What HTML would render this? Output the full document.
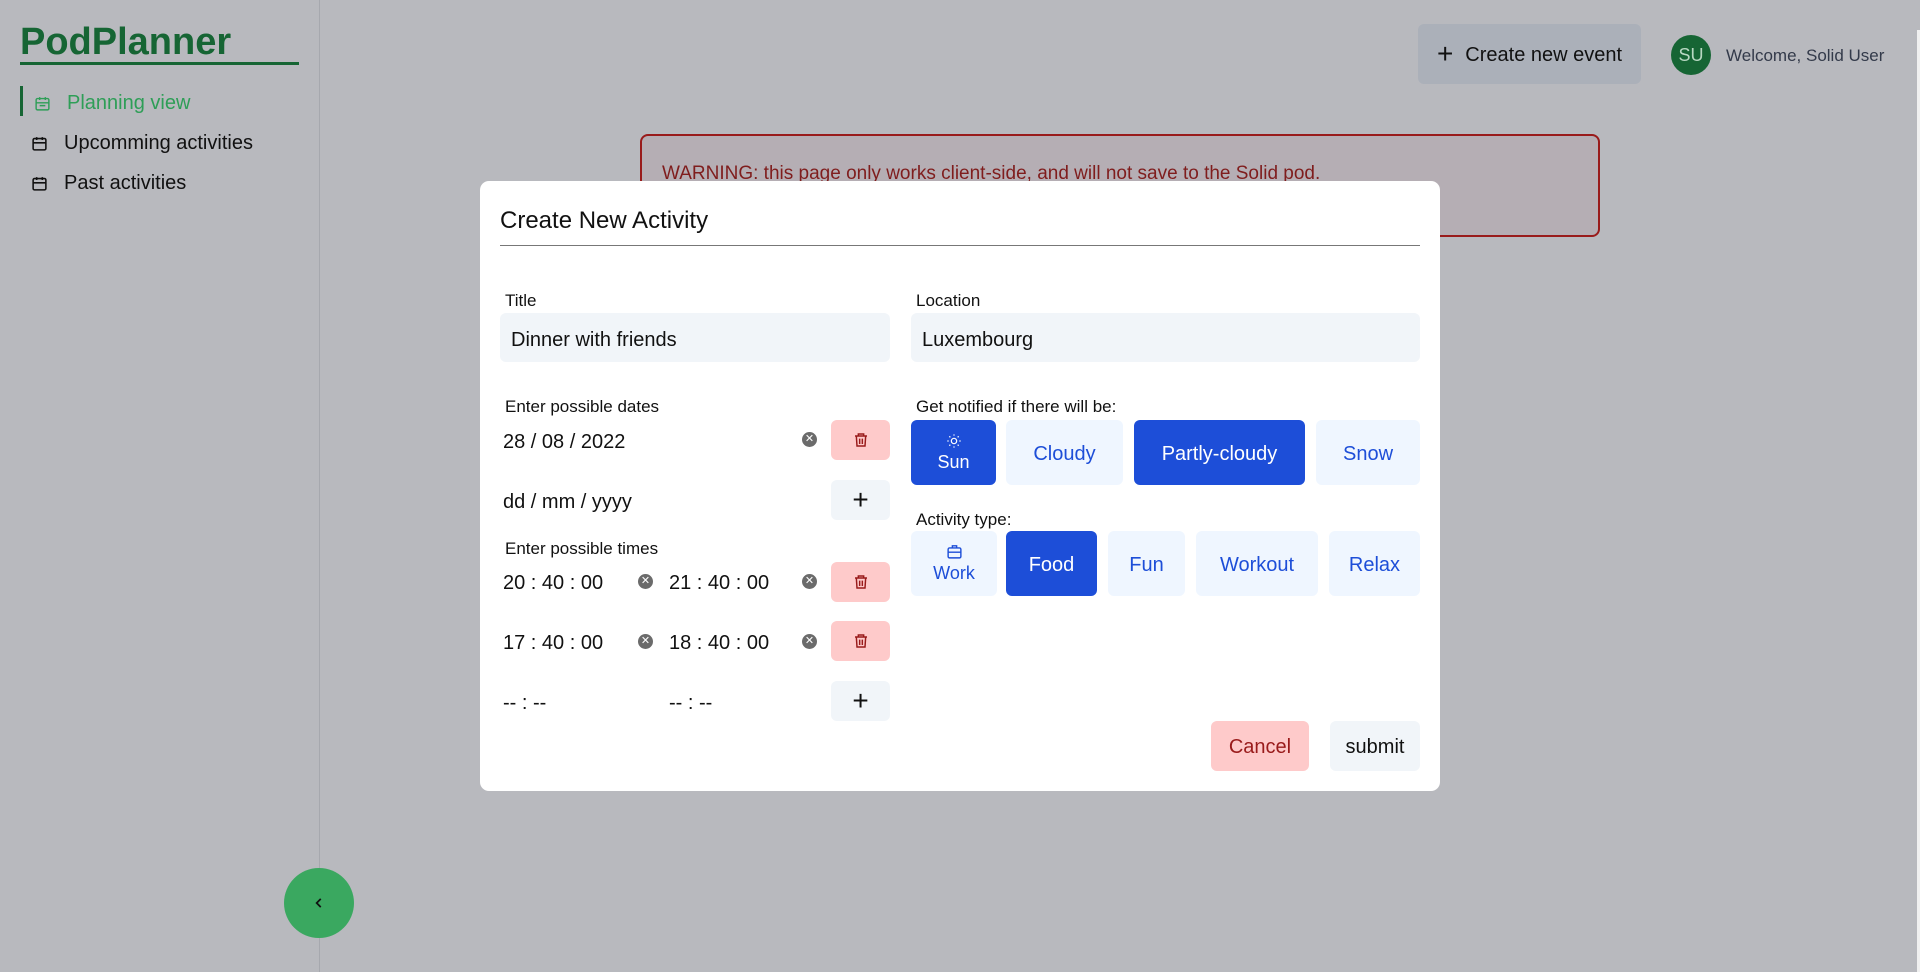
<!DOCTYPE html>
<html><head><meta charset="utf-8"><style>
*{box-sizing:border-box;margin:0;padding:0}
body{width:1920px;height:972px;overflow:hidden;background:#b8b9be;font-family:"Liberation Sans",sans-serif;position:relative;color:#111}
.a{position:absolute}
.side{left:0;top:0;width:320px;height:972px;border-right:1px solid #a6a8ae}
.logo{left:20px;top:22px;font-size:38px;font-weight:bold;color:#166534;width:279px;border-bottom:3px solid #166534;padding-bottom:0;line-height:40px}
.nav{left:30px;font-size:20px;display:flex;align-items:center;gap:16px}
.btn{position:absolute;display:flex;align-items:center;justify-content:center;border-radius:6px;font-size:20px}
.inp{position:absolute;background:#f1f5f9;border-radius:6px;font-size:20px;display:flex;align-items:center;padding-left:11px;padding-top:5px}
.lbl{position:absolute;font-size:17px}
.txt{position:absolute;font-size:20px}
.blue{background:#1d4ed8;color:#fff}
.lb{background:#eff6ff;color:#1d4ed8}
.red{background:#fecaca;color:#991b1b}
.gr{background:#f1f5f9;color:#111}
.clr{position:absolute;width:15px;height:15px;border-radius:50%;background:#6b6b6b;color:#fff;font-size:11px;display:flex;align-items:center;justify-content:center;line-height:1}
</style></head><body>
<div class="a side"></div>
<div class="a logo">PodPlanner</div>
<div class="a" style="left:20px;top:86px;width:3px;height:30px;background:#166534"></div>
<div class="a nav" style="left:34px;top:92px;color:#2e9e57"><svg width="17" height="17" viewBox="0 0 24 24" fill="none" stroke="currentColor" stroke-width="2"><rect x="3" y="5" width="18" height="16" rx="2"/><path d="M8 3v4M16 3v4M3 11h18M8 15h8"/></svg><span>Planning view</span></div>
<div class="a nav" style="left:31px;top:132px"><svg width="17" height="17" viewBox="0 0 24 24" fill="none" stroke="currentColor" stroke-width="2.2"><rect x="3" y="5" width="18" height="16" rx="2"/><path d="M8 3v4M16 3v4M3 11h18"/></svg><span>Upcomming activities</span></div>
<div class="a nav" style="left:31px;top:172px"><svg width="17" height="17" viewBox="0 0 24 24" fill="none" stroke="currentColor" stroke-width="2.2"><rect x="3" y="5" width="18" height="16" rx="2"/><path d="M8 3v4M16 3v4M3 11h18"/></svg><span>Past activities</span></div>
<div class="a" style="left:284px;top:868px;width:70px;height:70px;border-radius:50%;background:#3aa860;display:flex;align-items:center;justify-content:center"><svg width="14" height="14" viewBox="0 0 24 24" fill="none" stroke="#111" stroke-width="3"><path d="M15 5l-7 7 7 7"/></svg></div>

<div class="btn" style="left:1418px;top:24px;width:223px;height:60px;background:#abb0b9;color:#111;padding-top:3px"><span style="font-size:28px;font-weight:300;margin-right:12px;margin-top:-4px">+</span>Create new event</div>
<div class="a" style="left:1671px;top:35px;width:40px;height:40px;border-radius:50%;background:#166534;color:#b8d8c2;font-size:18px;display:flex;align-items:center;justify-content:center">SU</div>
<div class="txt" style="left:1726px;top:46px;font-size:17px;color:#333a4a">Welcome, Solid User</div>
<div class="a" style="left:640px;top:134px;width:960px;height:103px;border:2px solid #991b1b;border-radius:8px;background:#b5aeb4"></div>
<div class="txt" style="left:662px;top:163px;font-size:19px;color:#7f1d1d">WARNING: this page only works client-side, and will not save to the Solid pod.</div>

<div class="a" style="left:480px;top:181px;width:960px;height:610px;background:#fff;border-radius:9px"></div>
<div class="txt" style="left:500px;top:207px;font-size:24px">Create New Activity</div>
<div class="a" style="left:500px;top:245px;width:920px;height:1px;background:#777"></div>

<div class="lbl" style="left:505px;top:291px">Title</div>
<div class="inp" style="left:500px;top:313px;width:390px;height:49px">Dinner with friends</div>
<div class="lbl" style="left:916px;top:291px">Location</div>
<div class="inp" style="left:911px;top:313px;width:509px;height:49px">Luxembourg</div>

<div class="lbl" style="left:505px;top:397px">Enter possible dates</div>
<div class="txt" style="left:503px;top:431px">28 / 08 / 2022</div>
<div class="clr" style="left:802px;top:432px">✕</div>
<div class="btn red" style="left:831px;top:420px;width:59px;height:40px"><svg width="16" height="18" viewBox="0 0 24 24" fill="none" stroke="#991b1b" stroke-width="2.2"><path d="M3 6h18M8 6V3h8v3M5 6l1 15h12l1-15M10 10v8M14 10v8"/></svg></div>
<div class="txt" style="left:503px;top:491px">dd / mm / yyyy</div>
<div class="btn gr" style="left:831px;top:480px;width:59px;height:40px;font-size:28px;font-weight:300">+</div>

<div class="lbl" style="left:505px;top:539px">Enter possible times</div>
<div class="txt" style="left:503px;top:572px">20 : 40 : 00</div>
<div class="clr" style="left:638px;top:574px">✕</div>
<div class="txt" style="left:669px;top:572px">21 : 40 : 00</div>
<div class="clr" style="left:802px;top:574px">✕</div>
<div class="btn red" style="left:831px;top:562px;width:59px;height:40px"><svg width="16" height="18" viewBox="0 0 24 24" fill="none" stroke="#991b1b" stroke-width="2.2"><path d="M3 6h18M8 6V3h8v3M5 6l1 15h12l1-15M10 10v8M14 10v8"/></svg></div>
<div class="txt" style="left:503px;top:632px">17 : 40 : 00</div>
<div class="clr" style="left:638px;top:634px">✕</div>
<div class="txt" style="left:669px;top:632px">18 : 40 : 00</div>
<div class="clr" style="left:802px;top:634px">✕</div>
<div class="btn red" style="left:831px;top:621px;width:59px;height:40px"><svg width="16" height="18" viewBox="0 0 24 24" fill="none" stroke="#991b1b" stroke-width="2.2"><path d="M3 6h18M8 6V3h8v3M5 6l1 15h12l1-15M10 10v8M14 10v8"/></svg></div>
<div class="txt" style="left:503px;top:692px">-- : --</div>
<div class="txt" style="left:669px;top:692px">-- : --</div>
<div class="btn gr" style="left:831px;top:681px;width:59px;height:40px;font-size:28px;font-weight:300">+</div>

<div class="lbl" style="left:916px;top:397px">Get notified if there will be:</div>
<div class="btn blue" style="left:911px;top:420px;width:85px;height:65px;flex-direction:column;font-size:18px"><svg width="16" height="16" viewBox="0 0 24 24" fill="none" stroke="#fff" stroke-width="1.8"><circle cx="12" cy="12" r="4"/><path d="M12 2v2M12 20v2M2 12h2M20 12h2M5 5l1.5 1.5M17.5 17.5L19 19M5 19l1.5-1.5M17.5 6.5L19 5"/></svg><span style="margin-top:3px">Sun</span></div>
<div class="btn lb" style="left:1006px;top:420px;width:117px;height:65px;padding-top:4px">Cloudy</div>
<div class="btn blue" style="left:1134px;top:420px;width:171px;height:65px;padding-top:4px">Partly-cloudy</div>
<div class="btn lb" style="left:1316px;top:420px;width:104px;height:65px;padding-top:4px">Snow</div>

<div class="lbl" style="left:916px;top:510px">Activity type:</div>
<div class="btn lb" style="left:911px;top:531px;width:86px;height:65px;flex-direction:column;font-size:18px"><svg width="17" height="17" viewBox="0 0 24 24" fill="none" stroke="#1d4ed8" stroke-width="2"><rect x="3" y="7" width="18" height="14" rx="2"/><path d="M9 7V4h6v3M3 13h18"/></svg><span style="margin-top:3px">Work</span></div>
<div class="btn blue" style="left:1006px;top:531px;width:91px;height:65px;padding-top:4px">Food</div>
<div class="btn lb" style="left:1108px;top:531px;width:77px;height:65px;padding-top:4px">Fun</div>
<div class="btn lb" style="left:1196px;top:531px;width:122px;height:65px;padding-top:4px">Workout</div>
<div class="btn lb" style="left:1329px;top:531px;width:91px;height:65px;padding-top:4px">Relax</div>

<div class="btn red" style="left:1211px;top:721px;width:98px;height:50px;padding-top:3px">Cancel</div>
<div class="btn gr" style="left:1330px;top:721px;width:90px;height:50px;padding-top:3px">submit</div>
<div class="a" style="left:1917px;top:30px;width:3px;height:942px;background:#f0f0f0"></div>
</body></html>
